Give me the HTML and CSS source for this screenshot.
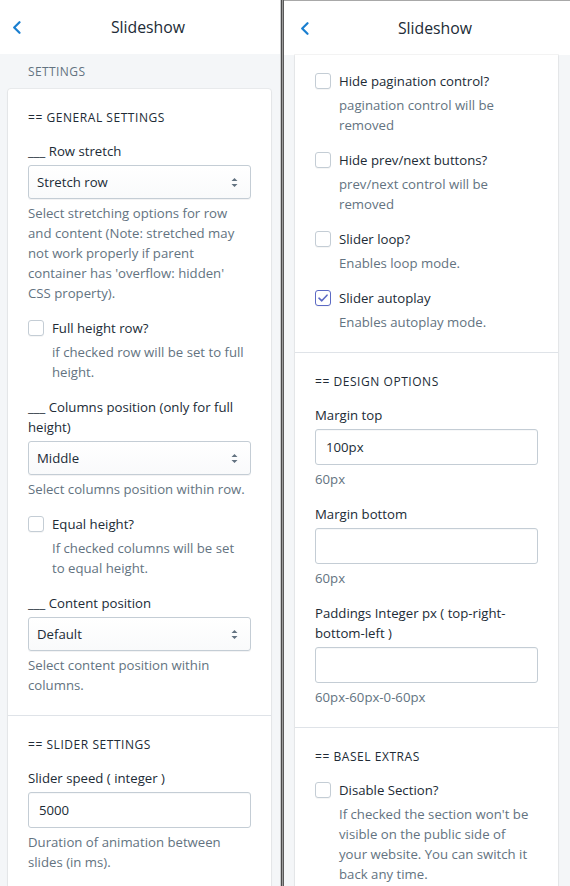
FILE: index.html
```html
<!DOCTYPE html>
<html>
<head>
<meta charset="utf-8">
<link rel="stylesheet" href="styles.css">
</head>
<body>
<div class="app">
  <section class="panel panel--left">
    <header class="topbar">
      <span class="back"><svg width="9" height="13" viewBox="0 0 9 13"><path d="M7.5 1.2 L2.2 6.5 L7.5 11.8" fill="none" stroke="#1a7fd0" stroke-width="2.2" stroke-linecap="round" stroke-linejoin="round"/></svg></span>
      <h1 class="title">Slideshow</h1>
      <span class="spacer"></span>
    </header>
    <div class="body">
      <div class="caption">Settings</div>
      <div class="card">
        <div class="section">
          <h3 class="section-title">== General settings</h3>
          <div class="fields">
            <div class="field">
              <label class="label">___ Row stretch</label>
              <div class="select"><span>Stretch row</span><svg width="7" height="11" viewBox="0 0 7 11"><path d="M3.5 1 L6.5 4 L0.5 4 Z M3.5 10 L6.5 7 L0.5 7 Z" fill="#637381"/></svg></div>
              <p class="help">Select stretching options for row and content (Note: stretched may not work properly if parent container has 'overflow: hidden'<br>CSS property).</p>
            </div>
            <div class="field">
              <label class="check"><span class="box"></span><span>Full height row?</span></label>
              <p class="help help--indent">if checked row will be set to full height.</p>
            </div>
            <div class="field">
              <label class="label">___ Columns position (only for full height)</label>
              <div class="select"><span>Middle</span><svg width="7" height="11" viewBox="0 0 7 11"><path d="M3.5 1 L6.5 4 L0.5 4 Z M3.5 10 L6.5 7 L0.5 7 Z" fill="#637381"/></svg></div>
              <p class="help">Select columns position within row.</p>
            </div>
            <div class="field">
              <label class="check"><span class="box"></span><span>Equal height?</span></label>
              <p class="help help--indent">If checked columns will be set<br>to equal height.</p>
            </div>
            <div class="field">
              <label class="label">___ Content position</label>
              <div class="select"><span>Default</span><svg width="7" height="11" viewBox="0 0 7 11"><path d="M3.5 1 L6.5 4 L0.5 4 Z M3.5 10 L6.5 7 L0.5 7 Z" fill="#637381"/></svg></div>
              <p class="help">Select content position within columns.</p>
            </div>
          </div>
        </div>
        <div class="section">
          <h3 class="section-title">== Slider settings</h3>
          <div class="fields">
            <div class="field">
              <label class="label">Slider speed ( integer )</label>
              <div class="input">5000</div>
              <p class="help">Duration of animation between slides (in ms).</p>
            </div>
          </div>
        </div>
      </div>
    </div>
  </section>
  <div class="divider"><span></span><span></span><span></span><span></span></div>
  <section class="panel panel--right">
    <header class="topbar">
      <span class="back"><svg width="9" height="13" viewBox="0 0 9 13"><path d="M7.5 1.2 L2.2 6.5 L7.5 11.8" fill="none" stroke="#1a7fd0" stroke-width="2.2" stroke-linecap="round" stroke-linejoin="round"/></svg></span>
      <h1 class="title">Slideshow</h1>
      <span class="spacer"></span>
    </header>
    <div class="body">
      <div class="card card--scrolled">
        <div class="section section--first">
          <div class="fields">
            <div class="field">
              <label class="check"><span class="box"></span><span>Hide pagination control?</span></label>
              <p class="help help--indent">pagination control will be removed</p>
            </div>
            <div class="field">
              <label class="check"><span class="box"></span><span>Hide prev/next buttons?</span></label>
              <p class="help help--indent">prev/next control will be removed</p>
            </div>
            <div class="field">
              <label class="check"><span class="box"></span><span>Slider loop?</span></label>
              <p class="help help--indent">Enables loop mode.</p>
            </div>
            <div class="field">
              <label class="check"><span class="box box--on"><svg width="10" height="8" viewBox="0 0 10 8"><path d="M1 4.2 L3.8 6.8 L9 1.2" fill="none" stroke="#5c6ac4" stroke-width="1.6" stroke-linecap="round" stroke-linejoin="round"/></svg></span><span>Slider autoplay</span></label>
              <p class="help help--indent">Enables autoplay mode.</p>
            </div>
          </div>
        </div>
        <div class="section">
          <h3 class="section-title">== Design options</h3>
          <div class="fields">
            <div class="field">
              <label class="label">Margin top</label>
              <div class="input">100px</div>
              <p class="help">60px</p>
            </div>
            <div class="field">
              <label class="label">Margin bottom</label>
              <div class="input"></div>
              <p class="help">60px</p>
            </div>
            <div class="field">
              <label class="label">Paddings Integer px ( top-right-bottom-left )</label>
              <div class="input"></div>
              <p class="help">60px-60px-0-60px</p>
            </div>
          </div>
        </div>
        <div class="section">
          <h3 class="section-title">== Basel extras</h3>
          <div class="fields">
            <div class="field">
              <label class="check"><span class="box"></span><span>Disable Section?</span></label>
              <p class="help help--indent">If checked the section won't be visible on the public side of<br>your website. You can switch it back any time.</p>
            </div>
          </div>
        </div>
      </div>
    </div>
  </section>
</div>
</body>
</html>
```

FILE: styles.css
```css
* { box-sizing: border-box; }
html, body { margin: 0; padding: 0; }
body {
  font-family: "Open Sans", "Noto Sans", sans-serif;
  font-size: 13.2px;
  line-height: 20px;
  color: #212b36;
  background: #f4f6f8;
  width: 570px;
  height: 886px;
  overflow: hidden;
}
.app {
  display: flex;
  height: 886px;
}
.panel {
  display: flex;
  flex-direction: column;
  background: #f4f6f8;
  overflow: hidden;
}
.panel--left { width: 280px; flex: none; }
.panel--right { flex: 1; border-top: 1px solid #a8a8a8; }

.divider { display: flex; width: 4px; flex: none; }
.divider span { width: 1px; }
.divider span:nth-child(1) { background: #c9cbcd; }
.divider span:nth-child(2) { background: #4a4a4a; }
.divider span:nth-child(3) { background: #9a9a9a; }
.divider span:nth-child(4) { background: #5a5a5a; }

.topbar {
  height: 54px;
  flex: none;
  display: flex;
  align-items: center;
  background: #fff;
}
.back {
  width: 30px;
  flex: none;
  display: flex;
  padding-left: 12px;
}
.panel--right .back { padding-left: 16px; }
.title {
  flex: 1;
  margin: 0;
  text-align: center;
  font-size: 15.8px;
  font-weight: 400;
  color: #212b36;
}
.spacer { width: 14px; flex: none; }

.body { flex: 1; padding: 8px 9px 0 8px; }
.panel--right .body { padding: 0 12px 0 11px; }

.caption {
  text-transform: uppercase;
  font-size: 12px;
  color: #637381;
  padding-left: 20px;
  line-height: 20px;
  margin-bottom: 7px;
  letter-spacing: 0.4px;
}
.card {
  background: #fff;
  border-radius: 3px;
  box-shadow: 0 0 0 1px rgba(63,63,68,0.06), 0 1px 2px rgba(63,63,68,0.1);
}
.card--scrolled { border-radius: 0 0 3px 3px; }
.section {
  padding: 19px 20px 20px;
  border-top: 1px solid #dfe3e8;
}
.section:first-child { border-top: 0; }
.section--first { padding-top: 16px; }
.section-title {
  margin: 0 0 13px;
  font-size: 12px;
  font-weight: 400;
  text-transform: uppercase;
  line-height: 20px;
  letter-spacing: 0.55px;
  color: #212b36;
}
.fields { display: flex; flex-direction: column; gap: 15px; }
.field { display: flex; flex-direction: column; }
.label { display: block; margin-bottom: 4px; }
.select, .input {
  height: 34px;
  border: 1px solid #c4cdd5;
  border-radius: 3px;
  display: flex;
  align-items: center;
}
.select {
  padding: 0 12px 0 8px;
  justify-content: space-between;
  background: linear-gradient(#fff, #f9fafb);
  box-shadow: 0 1px 0 rgba(22,29,37,0.05);
}
.input {
  height: 36px;
  padding: 0 10px;
  background: #fff;
  box-shadow: inset 0 1px 0 rgba(99,115,129,0.05);
}
.help {
  margin: 4px 0 0;
  color: #637381;
}
.help--indent { margin-top: 4px; padding-left: 24px; }
.check {
  display: flex;
  align-items: center;
  gap: 8px;
}
.box {
  width: 16px;
  height: 16px;
  flex: none;
  border: 1px solid #c4cdd5;
  border-radius: 3px;
  background: #fff;
  box-shadow: 0 1px 0 rgba(22,29,37,0.04);
  display: flex;
  align-items: center;
  justify-content: center;
}
.box--on { border-color: #5c6ac4; }
```
